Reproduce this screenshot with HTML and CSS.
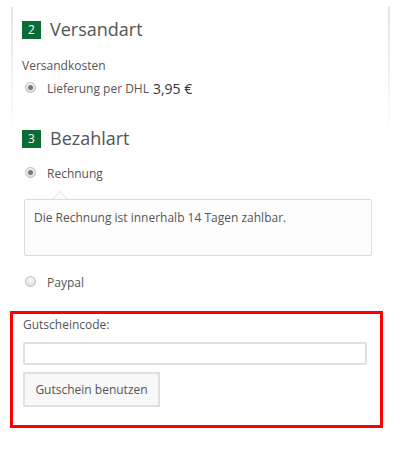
FILE: index.html
```html
<!DOCTYPE html>
<html lang="de">
<head>
    <meta charset="UTF-8">
    <title>Versand und Bezahlung</title>
    <link rel="stylesheet" href="styles.css">
</head>
<body>
    <div class="panel">
        <h2 class="step"><span class="step-num">2</span> Versandart</h2>
        <div class="label">Versandkosten</div>
        <label class="option">
            <span class="radio checked"></span>
            Lieferung per DHL <strong class="price">3,95 €</strong>
        </label>

        <h2 class="step step-pay"><span class="step-num">3</span> Bezahlart</h2>
        <label class="option">
            <span class="radio checked"></span>
            Rechnung
        </label>
        <div class="popover">Die Rechnung ist innerhalb 14 Tagen zahlbar.</div>
        <label class="option option-paypal">
            <span class="radio"></span>
            Paypal
        </label>
    </div>

    <div class="voucher">
        <div class="label">Gutscheincode:</div>
        <input class="voucher-input" type="text">
        <button class="btn">Gutschein benutzen</button>
    </div>
</body>
</html>
```

FILE: styles.css
```css
body {
    margin: 0;
    background: #fff;
    color: #555;
    font-family: 'Open Sans', 'Liberation Sans', sans-serif;
    font-size: 12px;
}

.panel {
    margin: 7px 10px 0 11px;
    padding: 13px 12px 0 9px;
    border-style: solid;
    border-width: 0 2px;
    border-image: linear-gradient(#e4e4e4, #efefef 20%, rgba(255, 255, 255, 0) 45%) 1;
}

.step {
    display: flex;
    align-items: center;
    gap: 9px;
    margin: 0 0 18px;
    font-size: 18px;
    font-weight: normal;
    color: #555;
    line-height: 19px;
}

.step-pay {
    margin-top: 31px;
    margin-bottom: 17px;
}

.step-num {
    display: inline-block;
    width: 19px;
    height: 18px;
    background: #0b6b35;
    color: #fff;
    font-size: 12px;
    line-height: 18px;
    text-align: center;
}

.label {
    line-height: 18px;
    margin-bottom: 5px;
}

.option {
    display: flex;
    align-items: center;
    line-height: 18px;
    padding-left: 3px;
}

.radio {
    display: inline-block;
    width: 9px;
    height: 9px;
    margin-right: 11px;
    border: 1px solid #bdbdbd;
    border-radius: 50%;
    background: radial-gradient(circle at 50% 35%, #fbfbfb, #d6d6d6);
    position: relative;
    top: -2px;
}

.radio.checked::after {
    content: "";
    position: absolute;
    left: 2px;
    top: 2px;
    width: 5px;
    height: 5px;
    border-radius: 50%;
    background: #777;
}

.price {
    font-weight: normal;
    font-size: 14px;
    color: #333;
    margin-left: 4px;
}

.popover {
    position: relative;
    margin: 16px 4px 0 2px;
    height: 57px;
    padding: 9px 9px 0;
    box-sizing: border-box;
    border: 1px solid #dcdcdc;
    border-radius: 2px;
    background: #fdfdfd;
    line-height: 18px;
}

.popover::before,
.popover::after {
    content: "";
    position: absolute;
    left: 27px;
    border-style: solid;
    border-color: transparent;
}

.popover::before {
    top: -9px;
    border-width: 0 8px 8px;
    border-bottom-color: #dcdcdc;
}

.popover::after {
    top: -8px;
    left: 28px;
    border-width: 0 7px 7px;
    border-bottom-color: #fdfdfd;
}

.option-paypal {
    margin-top: 18px;
}

.voucher {
    margin: 19px 17px 0 10px;
    padding: 2px 13px 18px 10px;
    border: 3px solid #f00;
}

.voucher .label {
    margin-bottom: 8px;
}

.voucher-input {
    display: block;
    box-sizing: border-box;
    width: 100%;
    height: 23px;
    margin: 0 0 7px;
    border: 2px solid #e0e0e0;
    border-radius: 2px;
    background: #fff;
}

.btn {
    display: block;
    height: 35px;
    width: 137px;
    padding: 0;
    border: 2px solid #e0e0e0;
    background: #f8f8f8;
    color: #555;
    font-family: 'Open Sans', 'Liberation Sans', sans-serif;
    font-size: 12px;
}
```
